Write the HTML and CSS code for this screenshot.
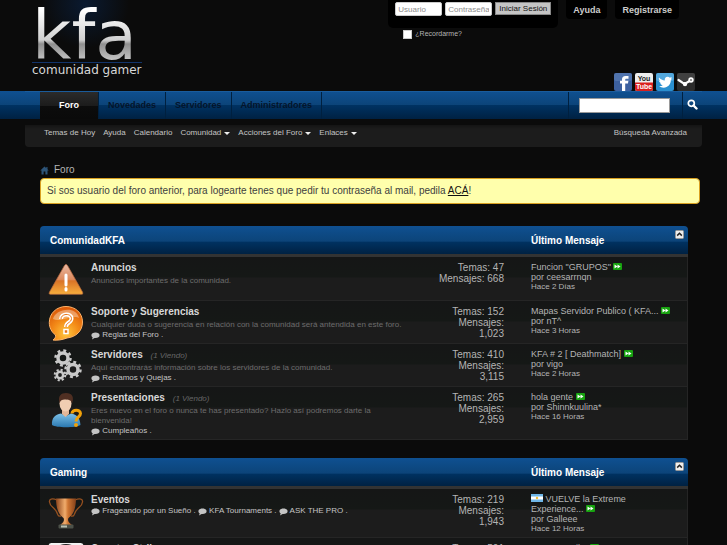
FILE: index.html
```html
<!DOCTYPE html>
<html lang="es">
<head>
  <meta charset="UTF-8" />
  <meta name="viewport" content="width=device-width, initial-scale=1.0" />
  <title>KFA - Comunidad Gamer</title>
  <link rel="stylesheet" href="styles.css">
</head>
<body>
  <!-- Iconos reutilizados -->
  <svg class="sprite" width="0" height="0" aria-hidden="true">
    <symbol id="i-bubble" viewBox="0 0 9 8">
      <path d="M4.5 0.5C6.8 0.5 8.6 1.500 8.600 3.200S6.800 5.900 4.500 5.900L3.600 5.900L1 7.400L1.700 5.300C0.900 4.800 0.400 4 0.400 3.200C0.400 1.500 2.200 0.500 4.500 0.500Z" fill="#c4c4c4"/>
    </symbol>
    <symbol id="i-go" viewBox="0 0 9 7">
      <rect width="9" height="7" rx="1" fill="#17a30f"/>
      <path d="M1.500 1.500L4.500 3.500L1.500 5.500ZM4.500 1.500L7.500 3.500L4.500 5.500Z" fill="#fff"/>
    </symbol>
    <symbol id="i-up" viewBox="0 0 9 9">
      <rect x="0.500" y="0.500" width="8" height="8" rx="1" fill="#eee" stroke="#999"/>
      <path d="M2.200 5.600L4.500 3.300L6.800 5.600" fill="none" stroke="#222" stroke-width="1.500"/>
    </symbol>
  </svg>

  <header class="header">
    <a class="logo" href="#">
      <span class="logo-name">kfa</span>
      <span class="logo-sub">comunidad gamer</span>
    </a>
    <div class="header-right">
      <div class="top-links">
        <form class="login">
          <div class="login-fields">
            <input type="text" placeholder="Usuario" aria-label="Usuario">
            <input type="password" placeholder="Contraseña" aria-label="Contraseña">
            <button type="button">Iniciar Sesión</button>
          </div>
          <label class="remember"><input type="checkbox"> ¿Recordarme?</label>
        </form>
        <a class="top-link" href="#">Ayuda</a>
        <a class="top-link" href="#">Registrarse</a>
      </div>
      <div class="social">
        <a href="#" aria-label="Facebook">
          <svg viewBox="0 0 18 18">
            <rect width="18" height="18" rx="2" fill="#3c609f"/>
            <rect width="18" height="8" rx="2" fill="#6385bb" opacity="0.5"/>
            <path d="M8 18V10.500H6V7.800H8V6.500C8 4.200 9.200 3 11.500 3H14.500V5.700H12.500C11.500 5.700 11.200 6 11.200 6.900V7.800H14.400L14 10.500H11.200V18Z" fill="#fff"/>
          </svg>
        </a>
        <a href="#" aria-label="YouTube">
          <svg viewBox="0 0 18 18">
            <rect width="18" height="18" rx="2" fill="#eee"/>
            <path d="M0 9.500H18V16A2 2 0 0 1 16 18H2A2 2 0 0 1 0 16Z" fill="#d9201f"/>
            <text x="9" y="8" text-anchor="middle" font-size="7" font-weight="bold" fill="#222">You</text>
            <text x="9" y="16" text-anchor="middle" font-size="7" font-weight="bold" fill="#fff">Tube</text>
          </svg>
        </a>
        <a href="#" aria-label="Twitter">
          <svg viewBox="0 0 18 18">
            <rect width="18" height="18" rx="2" fill="#2a8fcf"/>
            <rect width="18" height="8" rx="2" fill="#7cc2ec" opacity="0.500"/>
            <path d="M3 4.500C4.500 6.300 6.500 7.300 8.800 7.400C8.400 5.200 9.800 3.700 11.600 3.700C12.500 3.700 13.300 4.100 13.800 4.700L15.800 4L14.900 5.700L16.300 5.600L14.800 7.100C15 11.500 11.800 14.700 7.700 14.700C5.900 14.700 4.300 14.200 3 13.300C4.500 13.400 5.800 13 6.800 12.200C5.500 12.100 4.500 11.400 4.100 10.300H5.200C3.900 9.800 3.100 8.900 3 7.500L4.200 7.800C3 6.900 2.500 5.700 3 4.500Z" fill="#fff"/>
          </svg>
        </a>
        <a href="#" aria-label="Steam">
          <svg viewBox="0 0 18 18">
            <rect width="18" height="18" rx="2" fill="#2b2b2b"/>
            <rect width="18" height="8" rx="2" fill="#555" opacity="0.500"/>
            <path d="M1.500 7L7.500 11L13.500 7.500" fill="none" stroke="#fff" stroke-width="2.200" stroke-linecap="round"/>
            <circle cx="8" cy="11" r="2.200" fill="#fff"/>
            <circle cx="14" cy="7" r="2.700" fill="#fff"/>
            <circle cx="14" cy="7" r="1" fill="#777"/>
          </svg>
        </a>
      </div>
    </div>
  </header>

  <nav class="navbar">
    <div class="navbar-inner">
      <a class="tab active" href="#">Foro</a>
      <a class="tab" href="#">Novedades</a>
      <a class="tab" href="#">Servidores</a>
      <a class="tab" href="#">Administradores</a>
      <form class="search">
        <input type="text" aria-label="Buscar">
        <button type="button" aria-label="Buscar">
          <svg viewBox="0 0 11 11"><circle cx="4.300" cy="4.300" r="3" fill="none" stroke="#fff" stroke-width="1.700"/><path d="M6.500 6.500L9.500 9.500" stroke="#fff" stroke-width="2.400" stroke-linecap="round"/></svg>
        </button>
      </form>
    </div>
  </nav>

  <div class="subnav">
    <a href="#">Temas de Hoy</a>
    <a href="#">Ayuda</a>
    <a href="#">Calendario</a>
    <a class="drop" href="#">Comunidad</a>
    <a class="drop" href="#">Acciones del Foro</a>
    <a class="drop" href="#">Enlaces</a>
    <a class="advanced" href="#">Búsqueda Avanzada</a>
  </div>

  <main class="content">
    <div class="breadcrumb">
      <svg viewBox="0 0 9 9"><path d="M4.500 0.500L0.300 4.500H1.500V8.500H3.600V5.500H5.400V8.500H7.500V4.500H8.700L7.500 3.300V1H6.300V2.200Z" fill="#2d5478"/></svg>
      <span>Foro</span>
    </div>
    <div class="notice">Si sos usuario del foro anterior, para logearte tenes que pedir tu contraseña al mail, pedila <a href="#">ACÁ</a>!</div>

    <section class="category">
      <div class="category-head">
        <h2>ComunidadKFA</h2>
        <span>Último Mensaje</span>
        <button type="button" aria-label="Contraer"><svg viewBox="0 0 9 9"><use href="#i-up"/></svg></button>
      </div>
      <ul class="forums">
        <li class="forum">
          <svg class="forum-icon" viewBox="0 0 36 36">
            <defs>
              <linearGradient id="g-warn" x1="0" y1="0" x2="0" y2="1"><stop offset="0" stop-color="#e9b9a4"/><stop offset="0.500" stop-color="#dd8a5c"/><stop offset="0.550" stop-color="#d97427"/><stop offset="1" stop-color="#f7ae3d"/></linearGradient>
            </defs>
            <path d="M18 2.500C18.800 2.500 19.300 3.200 19.800 4L34.500 30C35.200 31.500 34.800 32.300 33.500 32.300H2.500C1.200 32.300 0.800 31.500 1.500 30L16.200 4C16.700 3.200 17.200 2.500 18 2.500Z" fill="url(#g-warn)" stroke="#b9683c" stroke-width="0.700"/>
            <path d="M18 13V23M18 26.500V28" stroke="#fff" stroke-width="3" stroke-linecap="round"/>
          </svg>
          <div class="forum-info">
            <h3><a href="#">Anuncios</a></h3>
            <p>Anuncios importantes de la comunidad.</p>
          </div>
          <div class="stats">Temas: 47<br>Mensajes: 668</div>
          <div class="last">
            <a href="#">Funcion "GRUPOS"</a> <svg class="go"><use href="#i-go"/></svg><br>
            por <a href="#">ceesarrnqn</a>
            <small>Hace 2 Días</small>
          </div>
        </li>
        <li class="forum">
          <svg class="forum-icon" viewBox="0 0 36 36">
            <defs>
              <radialGradient id="g-ask" cx="0.500" cy="0.800" r="0.800"><stop offset="0" stop-color="#ffc63f"/><stop offset="0.500" stop-color="#f38a17"/><stop offset="1" stop-color="#d95508"/></radialGradient>
            </defs>
            <path d="M18 0.500C27.500 0.500 34.500 7 34.500 16S28 31 19 32C14 34 9 34.500 5 34C7 33 7.800 31 7.500 29C3.500 26 1.300 21.500 1.300 16.500C1.300 7.500 8.500 0.500 18 0.500Z" fill="url(#g-ask)" stroke="#ffb469" stroke-width="1"/>
            <path d="M5 13C7 3 28 -1 31 12C25 8 12 17 5 13Z" fill="#fff" opacity="0.350"/>
            <path d="M13 13C13 7 23.500 7 23.500 12.500C23.500 17 18 16 18 21" fill="none" stroke="#fff" stroke-width="4"/>
            <path d="M13 13C13 7 23.500 7 23.500 12.500C23.500 17 18 16 18 21" fill="none" stroke="#e8751a" stroke-width="1"/>
            <rect x="16" y="23.500" width="4" height="4" fill="#e8751a" stroke="#fff" stroke-width="1.500"/>
          </svg>
          <div class="forum-info">
            <h3><a href="#">Soporte y Sugerencias</a></h3>
            <p>Cualquier duda o sugerencia en relación con la comunidad será antendida en este foro.</p>
            <div class="subforums"><svg class="bubble"><use href="#i-bubble"/></svg> <a href="#">Reglas del Foro</a> .</div>
          </div>
          <div class="stats">Temas: 152<br>Mensajes: 1,023</div>
          <div class="last">
            <a href="#">Mapas Servidor Publico ( KFA...</a> <svg class="go"><use href="#i-go"/></svg><br>
            por <a href="#">nT^</a>
            <small>Hace 3 Horas</small>
          </div>
        </li>
        <li class="forum">
          <svg class="forum-icon" viewBox="0 0 36 36">
            <g fill="none" stroke="#c9c9c9">
              <circle cx="15" cy="9" r="5" stroke-width="3.500"/>
              <circle cx="15" cy="9" r="7.500" stroke-width="2.500" stroke-dasharray="2.900 3"/>
              <circle cx="25" cy="20.500" r="5" stroke-width="3.500"/>
              <circle cx="25" cy="20.500" r="7.500" stroke-width="2.500" stroke-dasharray="2.900 3"/>
              <circle cx="12" cy="26" r="3.200" stroke-width="2.600"/>
              <circle cx="12" cy="26" r="5.300" stroke-width="2" stroke-dasharray="2.160 2"/>
            </g>
          </svg>
          <div class="forum-info">
            <h3><a href="#">Servidores</a> <em>(1 Viendo)</em></h3>
            <p>Aquí encontrarás información sobre los servidores de la comunidad.</p>
            <div class="subforums"><svg class="bubble"><use href="#i-bubble"/></svg> <a href="#">Reclamos y Quejas</a> .</div>
          </div>
          <div class="stats">Temas: 410<br>Mensajes: 3,115</div>
          <div class="last">
            <a href="#">KFA # 2 [ Deathmatch]</a> <svg class="go"><use href="#i-go"/></svg><br>
            por <a href="#">vigo</a>
            <small>Hace 2 Horas</small>
          </div>
        </li>
        <li class="forum">
          <svg class="forum-icon" viewBox="0 0 36 36">
            <defs>
              <linearGradient id="g-shirt" x1="0" y1="0" x2="0" y2="1"><stop offset="0" stop-color="#7cc0e8"/><stop offset="1" stop-color="#2a78b0"/></linearGradient>
            </defs>
            <path d="M4 33C3.500 26 7 22.500 13 21.500L18 24L23 21.500C29 22.500 32 26 32.500 33C28 36 8 36 4 33Z" fill="url(#g-shirt)"/>
            <path d="M14 16H21V22L17.500 25L14 22Z" fill="#e3b698"/>
            <ellipse cx="17.500" cy="11.500" rx="6" ry="8" fill="#f0cdb2"/>
            <path d="M11.500 11C9.500 4 13 1 18 1C24 1 26.500 5 24 11.500C23.500 8 21 8 18 7.500C15 7 12.500 8 11.500 11Z" fill="#4f2f22"/>
            <path d="M24 21.500C24 17 32.500 17 32.500 21.500C32.500 25 28 25 28 29.500" fill="none" stroke="#f1a10a" stroke-width="3"/>
            <circle cx="28" cy="33" r="2" fill="#f1a10a"/>
          </svg>
          <div class="forum-info">
            <h3><a href="#">Presentaciones</a> <em>(1 Viendo)</em></h3>
            <p>Eres nuevo en el foro o nunca te has presentado? Hazlo así podremos darte la bienvenida!</p>
            <div class="subforums"><svg class="bubble"><use href="#i-bubble"/></svg> <a href="#">Cumpleaños</a> .</div>
          </div>
          <div class="stats">Temas: 265<br>Mensajes: 2,959</div>
          <div class="last">
            <a href="#">hola gente</a> <svg class="go"><use href="#i-go"/></svg><br>
            por <a href="#">Shinnkuulina*</a>
            <small>Hace 16 Horas</small>
          </div>
        </li>
      </ul>
    </section>

    <section class="category">
      <div class="category-head">
        <h2>Gaming</h2>
        <span>Último Mensaje</span>
        <button type="button" aria-label="Contraer"><svg viewBox="0 0 9 9"><use href="#i-up"/></svg></button>
      </div>
      <ul class="forums">
        <li class="forum">
          <svg class="forum-icon" viewBox="0 0 36 36">
            <defs>
              <linearGradient id="g-cup"><stop offset="0" stop-color="#8d451c"/><stop offset="0.450" stop-color="#f0ac6c"/><stop offset="0.600" stop-color="#cf7633"/><stop offset="1" stop-color="#82401a"/></linearGradient>
            </defs>
            <path d="M9 6C4 4 1 5 1.500 8C2 14 8 13 10 21C10.500 22.500 12 22 13 22M27 6C32 4 35 5 34.500 8C34 14 28 13 26 21C25.500 22.500 24 22 23 22" fill="none" stroke="#95501f" stroke-width="1.300"/>
            <path d="M8 4.500H28C28 15 25 21 20.500 24C19.500 26 20 28 24 31H12C16 28 16.500 26 15.500 24C11 21 8 15 8 4.500Z" fill="url(#g-cup)"/>
            <rect x="10.500" y="30.500" width="15" height="4" rx="1" fill="#4c5149"/>
            <rect x="13" y="31.500" width="6" height="2" fill="#b9c0b2"/>
          </svg>
          <div class="forum-info">
            <h3><a href="#">Eventos</a></h3>
            <div class="subforums">
              <svg class="bubble"><use href="#i-bubble"/></svg> <a href="#">Frageando por un Sueño</a> .
              <svg class="bubble"><use href="#i-bubble"/></svg> <a href="#">KFA Tournaments</a> .
              <svg class="bubble"><use href="#i-bubble"/></svg> <a href="#">ASK THE PRO</a> .
            </div>
          </div>
          <div class="stats">Temas: 219<br>Mensajes: 1,943</div>
          <div class="last">
            <svg class="flag" viewBox="0 0 12 8"><rect width="12" height="8" fill="#6fb7e8"/><rect y="2.500" width="12" height="3" fill="#fff"/><circle cx="6" cy="4" r="1.200" fill="#f2bf3c"/></svg>
            <a href="#">VUELVE la Extreme Experience...</a> <svg class="go"><use href="#i-go"/></svg><br>
            por <a href="#">Galleee</a>
            <small>Hace 12 Horas</small>
          </div>
        </li>
        <li class="forum">
          <svg class="forum-icon" viewBox="0 0 36 36">
            <rect x="0.500" y="0" width="35" height="35" rx="3" fill="#f2f2f2"/>
            <circle cx="18" cy="17" r="15" fill="none" stroke="#222" stroke-width="2"/>
          </svg>
          <div class="forum-info">
            <h3><a href="#">Counter-Strike</a></h3>
          </div>
          <div class="stats">Temas: 501</div>
          <div class="last">
            <a href="#">Counter-strike</a> <svg class="go"><use href="#i-go"/></svg>
          </div>
        </li>
      </ul>
    </section>
  </main>
</body>
</html>
```
FILE: styles.css
```css
* {
  box-sizing: border-box;
}

html {
  height: 100%;
  overflow: hidden;
}

body {
  height: 100%;
  margin: 0;
  overflow: hidden;
  background-color: #0b0b0b;
  color: #b4b4b4;
  font-family: "Liberation Sans", Arial, sans-serif;
  font-size: 9px;
  line-height: 10px;
}

a {
  color: inherit;
  text-decoration: none;
}

h2, h3, p, ul {
  margin: 0;
  padding: 0;
  font-size: inherit;
}

svg {
  display: block;
}

.sprite {
  position: absolute;
}

button, input {
  font-family: inherit;
}

/* Cabecera */
.header {
  display: flex;
  justify-content: space-between;
  height: 91px;
  margin: 0 25px;
  background: radial-gradient(circle at 60px 4px, #0a1a30, transparent 44px);
}

.logo {
  display: flex;
  flex-direction: column;
  padding-left: 7px;
}

.logo-name {
  margin-bottom: -10px;
  font-family: "DejaVu Sans", sans-serif;
  font-size: 68px;
  line-height: 72px;
  background: linear-gradient(#fff 10px, #d0d0d0 40px, #8f8f8f 44px, #c4c4c4 60px);
  -webkit-background-clip: text;
  background-clip: text;
  color: transparent;
}

.logo-sub {
  border-top: 1px solid #12346b;
  font-family: "DejaVu Sans", sans-serif;
  font-size: 12px;
  line-height: 14px;
  color: #d8d8d8;
}

.header-right {
  display: flex;
  flex-direction: column;
  justify-content: space-between;
}

.top-links {
  display: flex;
  align-items: flex-start;
  gap: 8px;
  padding-right: 23px;
}

.login {
  width: 170px;
}

.login-fields {
  display: flex;
  align-items: flex-start;
  gap: 3px;
  height: 28px;
  padding: 2px 7px;
  background-color: #000;
  border-radius: 0 0 5px 5px;
}

.login-fields input {
  width: 47px;
  height: 14px;
  padding: 0 2px;
  border: 1px solid #ccc;
  border-radius: 2px;
  background-color: #fff;
  font-size: 8px;
}

.login-fields input::placeholder {
  color: #8c8c8c;
}

.login-fields button {
  height: 13px;
  flex: 1;
  padding: 0;
  border: 1px solid #888;
  background-color: #c4c4c4;
  color: #111;
  font-size: 8px;
  line-height: 10px;
  white-space: nowrap;
}

.remember {
  display: flex;
  align-items: center;
  gap: 3px;
  padding: 1px 15px;
  font-size: 7px;
}

.remember input {
  appearance: none;
  width: 9px;
  height: 9px;
  margin: 0;
  background-color: #fff;
  border: 1px solid #ccc;
}

.top-link {
  height: 19px;
  padding: 5px 7px;
  background-color: #000;
  border-radius: 0 0 4px 4px;
  color: #ccc;
  font-weight: bold;
}

.social {
  display: flex;
  justify-content: flex-end;
  gap: 3px;
  padding-right: 7px;
}

.social svg {
  width: 18px;
  height: 18px;
}

/* Barra de navegación */
.navbar {
  background: linear-gradient(#0f5091, #0c4479 50%, #003262 51%, #002142);
}

.navbar-inner {
  display: flex;
  height: 28px;
  margin: 0 25px;
  padding-left: 15px;
  border-top: 1px solid #1a5c9c;
}

.tab {
  padding: 8px 9px;
  border-right: 1px solid #00203f;
  color: #04142a;
  font-weight: bold;
}

.tab.active {
  padding: 8px 19px;
  background: linear-gradient(#2b2b2b, #1c1c1c 50%, #0c0c0c 51%, #0a0a0a);
  color: #fff;
}

.search {
  display: flex;
  margin-left: auto;
  border-left: 1px solid #00203f;
}

.search input {
  width: 91px;
  height: 15px;
  margin: 6px 12px 0 10px;
  border: 1px solid #999;
  background-color: #fff;
  font-size: 9px;
}

.search button {
  display: flex;
  align-items: flex-start;
  width: 20px;
  padding: 7px 4px 0;
  border: 0;
  border-left: 1px solid #00203f;
  background: none;
}

.search svg {
  width: 11px;
  height: 11px;
}

.subnav {
  display: flex;
  gap: 8px;
  height: 22px;
  margin: 6px 25px 0;
  padding: 3px 15px 0 19px;
  background: linear-gradient(#141414, #1c1c1c 4px);
  border-radius: 0 0 4px 4px;
  color: #c4c4c4;
  font-size: 8px;
}

.drop::after {
  content: "";
  display: inline-block;
  margin-left: 3px;
  border: 3px solid transparent;
  border-top-color: #eee;
  border-bottom: 0;
}

.advanced {
  margin-left: auto;
}

/* Contenido */
.content {
  margin: 0 39px 0 40px;
}

.breadcrumb {
  display: flex;
  align-items: center;
  gap: 5px;
  padding: 18px 0 3px;
  font-size: 10px;
}

.breadcrumb svg {
  width: 9px;
  height: 9px;
}

.notice {
  margin: 0 -12px 22px 0;
  padding: 6px;
  border: 1px solid #d9a021;
  border-radius: 4px;
  background-color: #ffffac;
  color: #3e3e3e;
  font-size: 10px;
  line-height: 12px;
}

.notice a {
  color: #111;
  text-decoration: underline;
}

.category {
  margin-bottom: 18px;
}

.category-head {
  display: grid;
  grid-template-columns: 1fr 144px 9px;
  height: 28px;
  padding: 0 4px 0 10px;
  border-radius: 4px 4px 0 0;
  background: linear-gradient(#0f5091, #0c4479 55%, #003262 56%, #002142);
  color: #fff;
  font-size: 10px;
  font-weight: bold;
  line-height: 30px;
}

.category-head button {
  width: 9px;
  height: 9px;
  margin-top: 4px;
  padding: 0;
  border: 0;
  background: none;
}

.forums {
  border-top: 3px solid #333;
  list-style: none;
}

.forum {
  display: grid;
  grid-template-columns: 36px 1fr 69px 183px;
  min-height: 43px;
  padding: 5px 0 3px 8px;
  border: 1px solid #252525;
  border-width: 0 1px 1px 0;
  background: linear-gradient(#151616, #151816 20px, #1c1c1c 21px);
}

.forum:first-child {
  min-height: 44px;
}

.forum-icon {
  width: 36px;
  height: 36px;
  margin-bottom: -4px;
}

.forum-info {
  padding: 0 30px 0 7px;
}

.forum-info h3 {
  height: 12px;
  color: #d8d8d8;
  font-size: 10px;
  line-height: 12px;
}

.forum-info em {
  margin-left: 5px;
  color: #666;
  font-size: 8px;
  font-weight: normal;
}

.forum-info p {
  margin-top: 2px;
  color: #6c6c6c;
  font-size: 8px;
}

.subforums {
  color: #c4c4c4;
  font-size: 8px;
}

.bubble {
  display: inline-block;
  width: 9px;
  height: 8px;
  vertical-align: bottom;
}

.stats {
  font-size: 10px;
  line-height: 11px;
  text-align: right;
}

.last {
  padding: 0 10px 0 27px;
}

.last small {
  display: block;
  font-size: 8px;
}

.go, .flag {
  display: inline-block;
  width: 9px;
  height: 7px;
  vertical-align: 0;
}

.flag {
  width: 12px;
  height: 8px;
}
```
